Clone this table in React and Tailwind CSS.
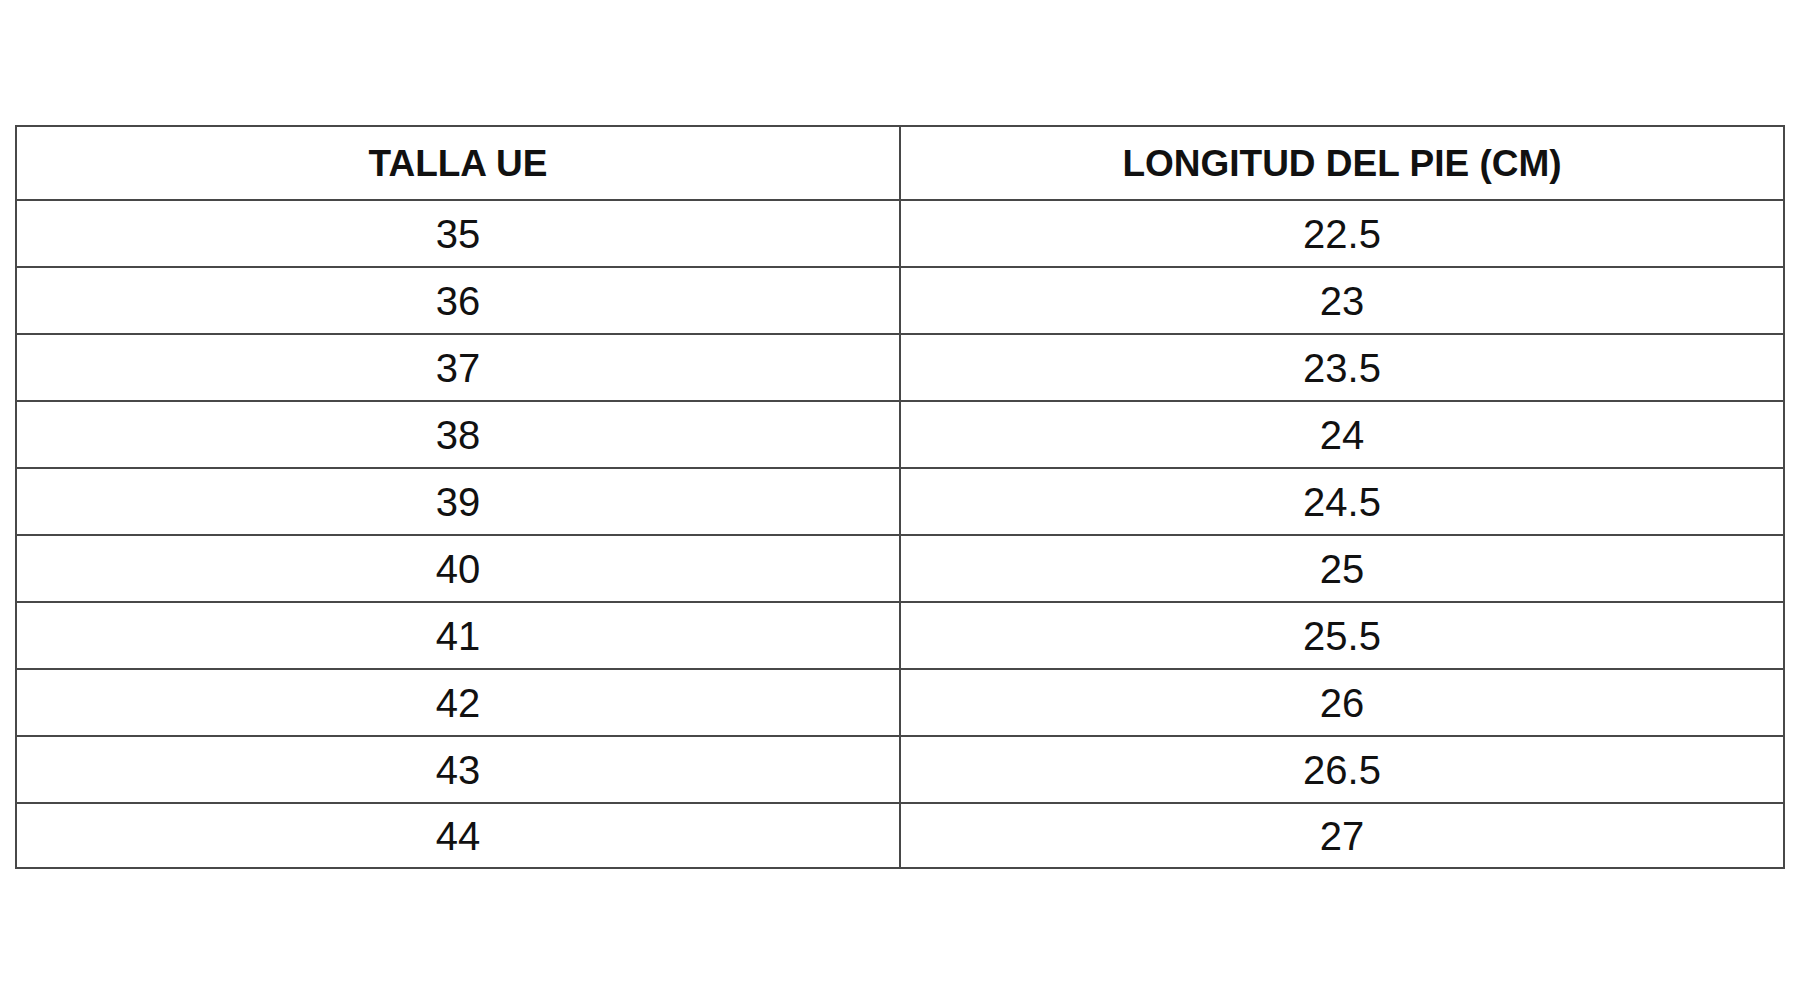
import React from "react";

const rows = [
  ["35", "22.5"],
  ["36", "23"],
  ["37", "23.5"],
  ["38", "24"],
  ["39", "24.5"],
  ["40", "25"],
  ["41", "25.5"],
  ["42", "26"],
  ["43", "26.5"],
  ["44", "27"],
];

export default function App() {
  return (
    <div
      className="w-full h-[1000px] bg-white pt-[125px] pl-[15px] text-[#111111]"
      style={{ fontFamily: '"Liberation Sans", Arial, sans-serif' }}
    >
      <div className="w-[1770px] border-2 border-[#484848] flex flex-col">
        <div className="flex h-[72px]">
          <div className="w-[884px] border-r-2 border-[#484848] flex items-center justify-center pt-[2px] text-[37px] font-bold">
            TALLA UE
          </div>
          <div className="flex-1 flex items-center justify-center pt-[2px] text-[37px] font-bold">
            LONGITUD DEL PIE (CM)
          </div>
        </div>
        {rows.map(([a, b], i) => (
          <div
            key={a}
            className={
              "flex border-t-2 border-[#484848] " +
              (i === rows.length - 1 ? "h-[65px]" : "h-[67px]")
            }
          >
            <div className="w-[884px] border-r-2 border-[#484848] flex items-center justify-center text-[40px]">
              {a}
            </div>
            <div className="flex-1 flex items-center justify-center text-[40px]">
              {b}
            </div>
          </div>
        ))}
      </div>
    </div>
  );
}
